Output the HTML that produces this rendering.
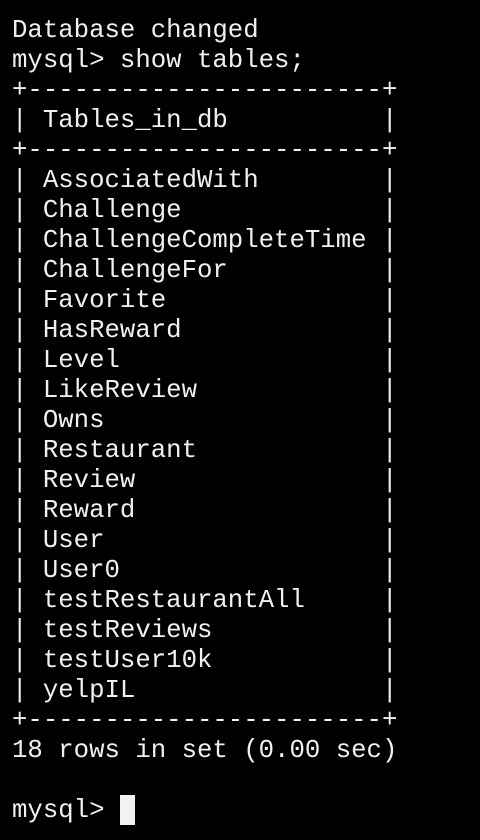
<!DOCTYPE html>
<html><head><meta charset="utf-8"><style>
html,body{margin:0;padding:0;background:#000;width:480px;height:840px;overflow:hidden}
pre{margin:0;padding:16px 0 0 12px;font-family:"Liberation Mono",monospace;font-size:25.7px;line-height:30px;color:#f0f0f0;white-space:pre}
.c{display:inline-block;width:15px;height:30px;background:#f2f2f2;vertical-align:top;margin-top:-1px}
</style></head><body><pre>Database changed
mysql&gt; show tables;
+-----------------------+
| Tables_in_db          |
+-----------------------+
| AssociatedWith        |
| Challenge             |
| ChallengeCompleteTime |
| ChallengeFor          |
| Favorite              |
| HasReward             |
| Level                 |
| LikeReview            |
| Owns                  |
| Restaurant            |
| Review                |
| Reward                |
| User                  |
| User0                 |
| testRestaurantAll     |
| testReviews           |
| testUser10k           |
| yelpIL                |
+-----------------------+
18 rows in set (0.00 sec)

mysql&gt; <span class="c"></span></pre></body></html>
